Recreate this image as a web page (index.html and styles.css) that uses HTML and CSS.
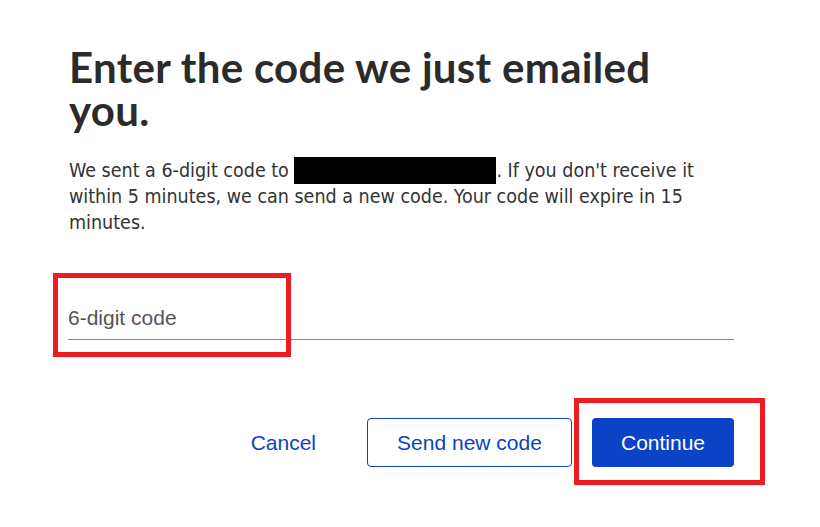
FILE: index.html
```html
<!DOCTYPE html>
<html lang="en">
<head>
<meta charset="utf-8">
<title>Enter the code</title>
<link rel="stylesheet" href="styles.css">
</head>
<body>
<main class="card">
  <h1 class="title">Enter the code we just emailed you.</h1>
  <p class="lead">We sent a 6-digit code to <span class="redact"></span>. If you don't receive it within 5 minutes, we can send a new code. Your code will expire in 15 minutes.</p>
  <div class="field">
    <input class="code-input" type="text" placeholder="6-digit code" aria-label="6-digit code">
    <span class="mark mark-field"></span>
  </div>
  <div class="actions">
    <button class="btn btn-link" type="button">Cancel</button>
    <button class="btn btn-outline" type="button">Send new code</button>
    <div class="primary-wrap">
      <button class="btn btn-primary" type="button">Continue</button>
      <span class="mark mark-primary"></span>
    </div>
  </div>
</main>
</body>
</html>
```
FILE: styles.css
```css
* { box-sizing: border-box; }
html, body { margin: 0; padding: 0; background: #fff; }
body { width: 820px; height: 527px; overflow: hidden; }

.card {
  padding: 46px 86px 0 68px;
  display: flex;
  flex-direction: column;
}

.title {
  margin: 0 0 0 1px;
  max-width: 640px;
  font-family: Lato, "Noto Sans", sans-serif;
  font-weight: 700;
  font-size: 42px;
  line-height: 43px;
  letter-spacing: 0.3px;
  color: #2b2b2b;
}

.lead {
  margin: 25px 0 0 1px;
  font-family: "DejaVu Sans Condensed", "DejaVu Sans", sans-serif;
  font-size: 19.5px;
  line-height: 26px;
  color: #333;
}

.redact {
  display: inline-block;
  width: 202px;
  height: 27px;
  background: #000;
  vertical-align: -7px;
}

.field {
  position: relative;
  margin-top: 59px;
}

.code-input {
  display: block;
  width: 100%;
  height: 45px;
  border: 0;
  border-bottom: 1px solid #8a8a8a;
  padding: 2px 0 0 0;
  font-family: "Liberation Sans", Arial, sans-serif;
  font-size: 21px;
  color: #333;
  outline: none;
  background: transparent;
}
.code-input::placeholder { color: #555; }

.mark {
  position: absolute;
  border: 5px solid #ee1c25;
  pointer-events: none;
}
.mark-field {
  left: -15px;
  top: -22px;
  width: 238px;
  height: 84px;
}

.actions {
  margin-top: 78px;
  display: flex;
  justify-content: flex-end;
  align-items: center;
  gap: 20px;
}

.btn {
  font-family: "Liberation Sans", Arial, sans-serif;
  font-size: 21px;
  height: 49px;
  border-radius: 4px;
  cursor: pointer;
}
.btn-link {
  background: none;
  border: 0;
  color: #0b42c6;
  padding: 0 14px;
  margin-right: 17px;
}
.btn-outline {
  width: 205px;
  background: #fff;
  border: 1px solid #0b42c6;
  color: #0b42c6;
}
.primary-wrap { position: relative; }
.btn-primary {
  display: block;
  width: 142px;
  background: #0b42c6;
  border: 0;
  color: #fff;
}
.mark-primary {
  left: -18px;
  top: -20px;
  width: 191px;
  height: 87px;
}
```
